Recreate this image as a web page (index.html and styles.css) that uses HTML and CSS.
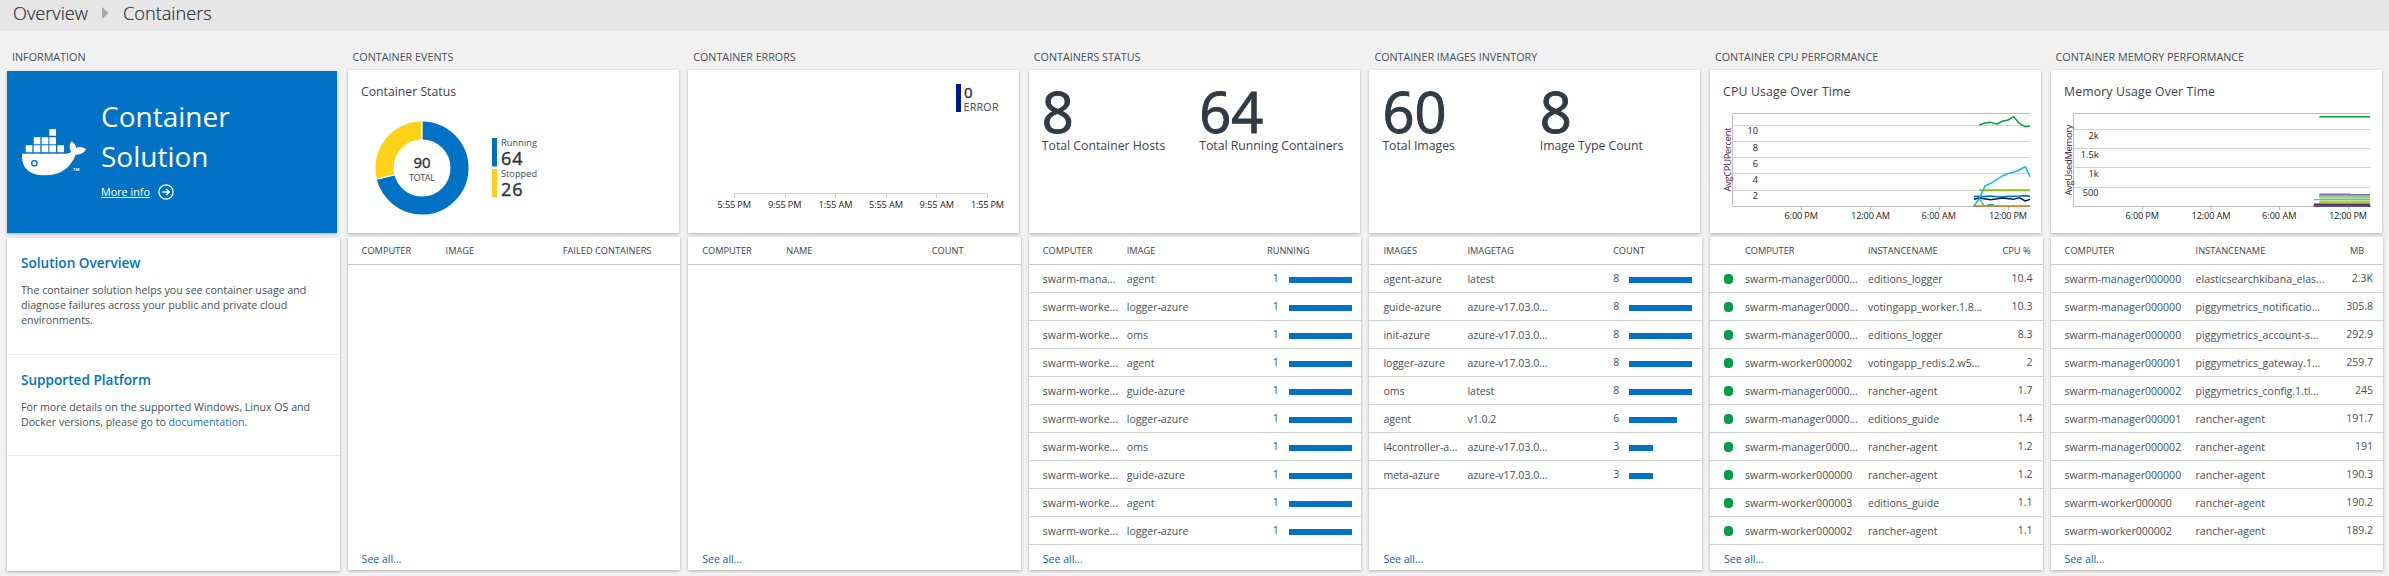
FILE: index.html
```html
<!DOCTYPE html>
<html lang="en">
<head>
<meta charset="utf-8">
<title>Containers</title>
<link rel="stylesheet" href="styles.css">
</head>
<body>
<header class="crumbs">
  <span>Overview</span>
  <svg class="crumb-arrow" width="7" height="12" viewBox="0 0 7 12"><path d="M0 0L6.5 6L0 12Z" fill="#a9a9a9"/></svg>
  <span>Containers</span>
</header>
<main class="board">
  <section class="column info">
    <h2 class="title">INFORMATION</h2>
    <div class="banner">
      <svg class="whale" width="66" height="48" viewBox="63 386 198 144">
        <g fill="#fff">
          <path d="M148 389h20v20h-20zM101 414h20v21h-20zM125 414h20v21h-20zM148 414h20v21h-20zM77 438h20v21h-20zM101 438h20v21h-20zM125 438h20v21h-20zM148 438h20v21h-20zM172 438h20v21h-20z"/>
          <path d="M66 463H195C203 463 209 461 213 457C207 447 208 434 215 426C222 431 228 438 228 445C238 441 250 443 258 450C252 462 240 467 227 466C212 506 180 528 135 528C88 528 64 506 66 463Z"/>
          <text x="219" y="515" font-size="11" font-weight="700" textLength="19" lengthAdjust="spacingAndGlyphs">TM</text>
        </g>
        <circle cx="103" cy="492" r="8" fill="#fff" stroke="#0072c6" stroke-width="4"/>
      </svg>
      <div class="banner-text">
        <h1 class="banner-title">Container<br>Solution</h1>
        <a class="more"><span class="more-label">More info</span>
          <svg width="16" height="16" viewBox="0 0 16 16" fill="none" stroke="#fff" stroke-width="1.2"><circle cx="8" cy="8" r="7.1"/><path d="M4.3 8H11M8.2 5L11.2 8L8.2 11" stroke-width="1.5"/></svg>
        </a>
      </div>
    </div>
    <div class="panel articles">
      <article class="article first"><h3>Solution Overview</h3><p>The container solution helps you see container usage and<br>diagnose failures across your public and private cloud<br>environments.</p></article>
      <article class="article second"><h3>Supported Platform</h3><p>For more details on the supported Windows, Linux OS and<br>Docker versions, please go to <a>documentation</a>.</p></article>
    </div>
  </section>

  <section class="column">
    <h2 class="title">CONTAINER EVENTS</h2>
    <div class="tile">
      <svg class="chart" width="331" height="163" viewBox="348 70 331 163">
        <text class="chart-title" x="361" y="96" textLength="95">Container Status</text>
        <g fill="none" stroke-width="18" transform="rotate(-90 422 168)">
          <circle cx="422" cy="168" r="37.5" stroke="#0072c6" pathLength="90" stroke-dasharray="64 26"/>
          <circle cx="422" cy="168" r="37.5" stroke="#fcd116" pathLength="90" stroke-dasharray="26 64" stroke-dashoffset="-64"/>
        </g>
        <path d="M422 168V120M422 168L375 179.7" stroke="#fff" stroke-width="1.3"/>
        <text class="num" x="422" y="167.7" font-size="15" text-anchor="middle">90</text>
        <text class="small" x="409" y="181" textLength="26">TOTAL</text>
        <rect x="492" y="138" width="5" height="28.5" fill="#0072c6"/>
        <rect x="492" y="169" width="5" height="28.5" fill="#fcd116"/>
        <text class="small" x="501" y="146" textLength="36">Running</text>
        <text class="num" x="501" y="164.7" font-size="18" textLength="21.5">64</text>
        <text class="small" x="501" y="177" textLength="36">Stopped</text>
        <text class="num" x="501" y="195.7" font-size="18" textLength="21.5">26</text>
      </svg>
    </div>
    <div class="panel table basic">
      <div class="row head"><span>COMPUTER</span><span>IMAGE</span><span>FAILED CONTAINERS</span></div>
      <a class="see">See all...</a>
    </div>
  </section>

  <section class="column">
    <h2 class="title">CONTAINER ERRORS</h2>
    <div class="tile">
      <svg class="chart" width="331" height="163" viewBox="688 70 331 163">
        <rect x="956" y="84" width="5" height="28" fill="#00188f"/>
        <text class="num" x="964" y="98" font-size="15">0</text>
        <text x="963.5" y="111.3" font-size="10.7" fill="#40474f" textLength="35">ERROR</text>
        <path d="M734.5 198V193.5H987.5V198M785.5 193.5V198M835.5 193.5V198M886.5 193.5V198M936.5 193.5V198" fill="none" stroke="#d0d0d4"/>
        <g class="axis">
          <text x="717.5" y="208" textLength="33.5">5:55 PM</text><text x="768" y="208" textLength="33.5">9:55 PM</text><text x="818.5" y="208" textLength="34">1:55 AM</text><text x="869" y="208" textLength="34">5:55 AM</text><text x="919.5" y="208" textLength="34.5">9:55 AM</text><text x="971" y="208" textLength="33">1:55 PM</text>
        </g>
      </svg>
    </div>
    <div class="panel table basic">
      <div class="row head"><span>COMPUTER</span><span>NAME</span><span>COUNT</span></div>
      <a class="see">See all...</a>
    </div>
  </section>

  <section class="column">
    <h2 class="title">CONTAINERS STATUS</h2>
    <div class="tile stats">
      <div class="stat"><b>8</b><span>Total Container Hosts</span></div>
      <div class="stat"><b>64</b><span>Total Running Containers</span></div>
    </div>
    <div class="panel table basic">
      <div class="row head"><span>COMPUTER</span><span>IMAGE</span><span>RUNNING</span></div>
      <div class="row"><span>swarm-mana...</span><span>agent</span><span>1</span><i class="bar" style="width:63px"></i></div>
      <div class="row"><span>swarm-worke...</span><span>logger-azure</span><span>1</span><i class="bar" style="width:63px"></i></div>
      <div class="row"><span>swarm-worke...</span><span>oms</span><span>1</span><i class="bar" style="width:63px"></i></div>
      <div class="row"><span>swarm-worke...</span><span>agent</span><span>1</span><i class="bar" style="width:63px"></i></div>
      <div class="row"><span>swarm-worke...</span><span>guide-azure</span><span>1</span><i class="bar" style="width:63px"></i></div>
      <div class="row"><span>swarm-worke...</span><span>logger-azure</span><span>1</span><i class="bar" style="width:63px"></i></div>
      <div class="row"><span>swarm-worke...</span><span>oms</span><span>1</span><i class="bar" style="width:63px"></i></div>
      <div class="row"><span>swarm-worke...</span><span>guide-azure</span><span>1</span><i class="bar" style="width:63px"></i></div>
      <div class="row"><span>swarm-worke...</span><span>agent</span><span>1</span><i class="bar" style="width:63px"></i></div>
      <div class="row"><span>swarm-worke...</span><span>logger-azure</span><span>1</span><i class="bar" style="width:63px"></i></div>
      <a class="see">See all...</a>
    </div>
  </section>

  <section class="column">
    <h2 class="title">CONTAINER IMAGES INVENTORY</h2>
    <div class="tile stats">
      <div class="stat"><b>60</b><span>Total Images</span></div>
      <div class="stat"><b>8</b><span>Image Type Count</span></div>
    </div>
    <div class="panel table basic">
      <div class="row head"><span>IMAGES</span><span>IMAGETAG</span><span>COUNT</span></div>
      <div class="row"><span>agent-azure</span><span>latest</span><span>8</span><i class="bar" style="width:63px"></i></div>
      <div class="row"><span>guide-azure</span><span>azure-v17.03.0...</span><span>8</span><i class="bar" style="width:63px"></i></div>
      <div class="row"><span>init-azure</span><span>azure-v17.03.0...</span><span>8</span><i class="bar" style="width:63px"></i></div>
      <div class="row"><span>logger-azure</span><span>azure-v17.03.0...</span><span>8</span><i class="bar" style="width:63px"></i></div>
      <div class="row"><span>oms</span><span>latest</span><span>8</span><i class="bar" style="width:63px"></i></div>
      <div class="row"><span>agent</span><span>v1.0.2</span><span>6</span><i class="bar" style="width:48px"></i></div>
      <div class="row"><span>l4controller-a...</span><span>azure-v17.03.0...</span><span>3</span><i class="bar" style="width:24px"></i></div>
      <div class="row"><span>meta-azure</span><span>azure-v17.03.0...</span><span>3</span><i class="bar" style="width:24px"></i></div>
      <a class="see">See all...</a>
    </div>
  </section>

  <section class="column">
    <h2 class="title">CONTAINER CPU PERFORMANCE</h2>
    <div class="tile">
      <svg class="chart" width="331" height="163" viewBox="1710 70 331 163">
        <text class="chart-title" x="1723" y="96" textLength="127.5">CPU Usage Over Time</text>
        <path d="M1732 125.5H2030M1732 141.5H2030M1732 157.5H2030M1732 173.5H2030M1732 190.5H2030" stroke="#d3d3d3"/>
        <path d="M2030 113.5H1732.5V206.5H2030M1801.5 206V210M1870.5 206V210M1939.5 206V210M2008.5 206V210" fill="none" stroke="#bdbdbd"/>
        <g class="axis">
          <text x="1758" y="134.4" text-anchor="end">10</text><text x="1758" y="151" text-anchor="end">8</text><text x="1758" y="167" text-anchor="end">6</text><text x="1758" y="183.2" text-anchor="end">4</text><text x="1758" y="199" text-anchor="end">2</text>
          <text x="1784.5" y="219" textLength="33.5">6:00 PM</text><text x="1851" y="219" textLength="39">12:00 AM</text><text x="1921.5" y="219" textLength="34.5">6:00 AM</text><text x="1989" y="219" textLength="38">12:00 PM</text>
          <text class="vertical" transform="translate(1731 191.5) rotate(-90)" textLength="64">AvgCPUPercent</text>
        </g>
        <g fill="none" stroke-width="4.4" stroke-linejoin="round" transform="translate(1700 40) scale(.33333)">
          <path d="M838 451H990" stroke="#8cbd18" stroke-width="6"/>
          <path d="M838 477L852 496" stroke="#68c04a"/>
          <path d="M862 495L882 494" stroke="#00b294"/>
          <path d="M822 469L850 470L872 468L900 471L930 469L960 468L975 467L990 469" stroke="#0072c6" stroke-width="5"/>
          <path d="M822 478L838 474L872 479L907 474L941 478L958 473L976 483L990 478" stroke="#002050"/>
          <path d="M822 498L838 475L855 438L872 430L907 408L924 401L941 396L958 390L976 380L990 410" stroke="#00bcf2"/>
          <path d="M838 255L855 249L872 247L890 252L907 244L924 240L941 230L958 250L975 260L990 258" stroke="#009e49"/>
          <path d="M820 498H990" stroke="#c4761b" stroke-width="5"/>
        </g>
      </svg>
    </div>
    <div class="panel table cpu">
      <div class="row head"><span></span><span>COMPUTER</span><span>INSTANCENAME</span><span>CPU %</span></div>
      <div class="row"><i class="dot"></i><span>swarm-manager0000...</span><span>editions_logger</span><span>10.4</span></div>
      <div class="row"><i class="dot"></i><span>swarm-manager0000...</span><span>votingapp_worker.1.8...</span><span>10.3</span></div>
      <div class="row"><i class="dot"></i><span>swarm-manager0000...</span><span>editions_logger</span><span>8.3</span></div>
      <div class="row"><i class="dot"></i><span>swarm-worker000002</span><span>votingapp_redis.2.w5...</span><span>2</span></div>
      <div class="row"><i class="dot"></i><span>swarm-manager0000...</span><span>rancher-agent</span><span>1.7</span></div>
      <div class="row"><i class="dot"></i><span>swarm-manager0000...</span><span>editions_guide</span><span>1.4</span></div>
      <div class="row"><i class="dot"></i><span>swarm-manager0000...</span><span>rancher-agent</span><span>1.2</span></div>
      <div class="row"><i class="dot"></i><span>swarm-worker000000</span><span>rancher-agent</span><span>1.2</span></div>
      <div class="row"><i class="dot"></i><span>swarm-worker000003</span><span>editions_guide</span><span>1.1</span></div>
      <div class="row"><i class="dot"></i><span>swarm-worker000002</span><span>rancher-agent</span><span>1.1</span></div>
      <a class="see">See all...</a>
    </div>
  </section>

  <section class="column">
    <h2 class="title">CONTAINER MEMORY PERFORMANCE</h2>
    <div class="tile">
      <svg class="chart" width="331" height="163" viewBox="2051 70 331 163">
        <text class="chart-title" x="2064" y="96" textLength="151">Memory Usage Over Time</text>
        <path d="M2073 129.5H2370M2073 148.5H2370M2073 167.5H2370M2073 187.5H2370" stroke="#d3d3d3"/>
        <path d="M2370 113.5H2073.5V206.5H2370M2142.5 206V210M2210.5 206V210M2279.5 206V210M2348.5 206V210" fill="none" stroke="#bdbdbd"/>
        <g class="axis">
          <text x="2098.5" y="139" text-anchor="end">2k</text><text x="2098.5" y="158" text-anchor="end">1.5k</text><text x="2098.5" y="177" text-anchor="end">1k</text><text x="2098.5" y="196" text-anchor="end">500</text>
          <text x="2125.5" y="219" textLength="33.5">6:00 PM</text><text x="2191.5" y="219" textLength="39">12:00 AM</text><text x="2262" y="219" textLength="34.5">6:00 AM</text><text x="2329" y="219" textLength="38">12:00 PM</text>
          <text class="vertical" transform="translate(2071.5 195.5) rotate(-90)" textLength="71">AvgUsedMemory</text>
        </g>
        <g fill="none" stroke-width="3.5" transform="translate(2040 40) scale(.33333)">
          <path d="M838 230H990" stroke="#009e49" stroke-width="4.5"/>
          <path d="M838 461H932" stroke="#d9a5d6"/>
          <path d="M838 464H990" stroke="#8764b8"/>
          <path d="M838 467H990" stroke="#82a8e0"/>
          <path d="M838 471H990" stroke="#7ac943" stroke-width="5"/>
          <path d="M838 476H990" stroke="#a6e3c8"/>
          <path d="M822 479H990" stroke="#2cd0d6" stroke-width="4"/>
          <path d="M838 486H990" stroke="#bad03a" stroke-width="9"/>
          <path d="M822 491H990" stroke="#a98f6c"/>
          <path d="M822 494H990" stroke="#68217a" stroke-width="4"/>
          <path d="M820 498H992" stroke="#163a5c" stroke-width="4"/>
          <path d="M820 498H826" stroke="#dc6b10" stroke-width="4"/>
        </g>
      </svg>
    </div>
    <div class="panel table memory">
      <div class="row head"><span>COMPUTER</span><span>INSTANCENAME</span><span>MB</span></div>
      <div class="row"><span>swarm-manager000000</span><span>elasticsearchkibana_elas...</span><span>2.3K</span></div>
      <div class="row"><span>swarm-manager000000</span><span>piggymetrics_notificatio...</span><span>305.8</span></div>
      <div class="row"><span>swarm-manager000000</span><span>piggymetrics_account-s...</span><span>292.9</span></div>
      <div class="row"><span>swarm-manager000001</span><span>piggymetrics_gateway.1...</span><span>259.7</span></div>
      <div class="row"><span>swarm-manager000002</span><span>piggymetrics_config.1.tl...</span><span>245</span></div>
      <div class="row"><span>swarm-manager000001</span><span>rancher-agent</span><span>191.7</span></div>
      <div class="row"><span>swarm-manager000002</span><span>rancher-agent</span><span>191</span></div>
      <div class="row"><span>swarm-manager000000</span><span>rancher-agent</span><span>190.3</span></div>
      <div class="row"><span>swarm-worker000000</span><span>rancher-agent</span><span>190.2</span></div>
      <div class="row"><span>swarm-worker000002</span><span>rancher-agent</span><span>189.2</span></div>
      <a class="see">See all...</a>
    </div>
  </section>
</main>
</body>
</html>
```
FILE: styles.css
```css
* { box-sizing: border-box; }
body {
  margin: 0;
  width: 2389px;
  height: 576px;
  overflow: hidden;
  background: #f1f1f1;
  color: #464f59;
  font-family: "Open Sans", "Noto Sans", sans-serif;
  font-size: 10.55px;
}
h1, h2, h3, p { margin: 0; font-weight: 400; }

.crumbs {
  display: flex;
  align-items: center;
  height: 31px;
  padding: 0 0 6px 13px;
  background: #e6e6e6;
  color: #2b333c;
  font-size: 18.2px;
  font-weight: 300;
  -webkit-text-stroke: .2px #2b333c;
}
.crumb-arrow { margin: 0 14px 0 14px; }

.board {
  display: grid;
  grid-template-columns: repeat(7, 332.6px);
  column-gap: 8px;
  padding: 19px 0 0 7px;
}
.column { display: flex; flex-direction: column; }
.title {
  height: 20px;
  padding-left: 5px;
  font-size: 10.75px;
  line-height: 14px;
  white-space: nowrap;
}

.tile, .banner, .panel { box-shadow: 0 1px 3px rgba(0, 0, 0, .28); }
.tile { width: 331px; height: 163px; background: #fff; }
.chart { display: block; }
.chart-title { font-size: 12.25px; fill: #3b434c; }
.num { fill: #2b323a; stroke: #2b323a; stroke-width: .4px; }
.small { font-size: 9.2px; fill: #40474f; }
.axis { font-size: 9.2px; fill: #222; }
.vertical { font-size: 9.4px; fill: #40204a; }

.banner {
  display: flex;
  width: 330px;
  height: 162px;
  margin-top: 1px;
  padding: 25px 0 0 14px;
  background: #0072c6;
  color: #fff;
}
.whale { margin-top: 32px; }
.banner-title { font-size: 28px; line-height: 40px; }
.banner-text { padding-left: 14px; }
.more { display: flex; align-items: center; gap: 8px; margin-top: 8px; }
.more-label { font-size: 10.8px; line-height: 16px; text-decoration: underline; }

.panel { height: 333px; margin-top: 4px; background: #fff; }
.articles { margin-top: 5px; }
.article { padding: 16px 14px 0; border-bottom: 1px solid #ededed; }
.article h3 { color: #0072c6; font-size: 13.6px; font-weight: 600; line-height: 18px; }
.article p { margin-top: 11px; font-size: 10.65px; line-height: 15px; white-space: nowrap; }
.article a { color: #2070b8; }
.first { height: 117px; }
.second { height: 101px; }

.stats { display: grid; grid-template-columns: 157.4px 1fr; padding: 14px 0 0 13px; }
.stat { display: flex; flex-direction: column; }
.stat b {
  color: #323a43;
  font-size: 56px;
  font-weight: 400;
  line-height: 54px;
  -webkit-text-stroke: 1px #323a43;
}
.stat span { color: #3b434c; font-size: 12.25px; line-height: 16px; white-space: nowrap; }

.table { display: flex; flex-direction: column; }
.row {
  display: grid;
  align-items: center;
  height: 28px;
  padding: 1px 0 0 14px;
  border-bottom: 1px solid #d0d0d0;
  white-space: nowrap;
}
.row > span { line-height: 16px; }
.basic .row { grid-template-columns: 84px 113px 39px 73px; }
.basic .head { grid-template-columns: 84px 113px 97px; }
.cpu .row { grid-template-columns: 21px 123px 132.5px 32px; }
.memory .row { grid-template-columns: 131px 145.5px 32px; }
.basic .row > span:nth-child(3), .cpu .row > span:last-child, .memory .row > span:last-child {
  text-align: right;
  margin-top: -2px;
}
.row.head { border-bottom-color: #c8c8c8; font-size: 9.25px; color: #3b434c; }
.table .row.head > span:last-child { text-align: center; margin-top: 0; }
.bar { height: 6px; margin-left: 10px; margin-top: 1px; background: #0072c6; }
.dot { width: 9px; height: 10px; border-radius: 4px; background: #009e49; }
.see { margin: auto 0 2px 14px; line-height: 18px; color: #0a62ad; }
```
